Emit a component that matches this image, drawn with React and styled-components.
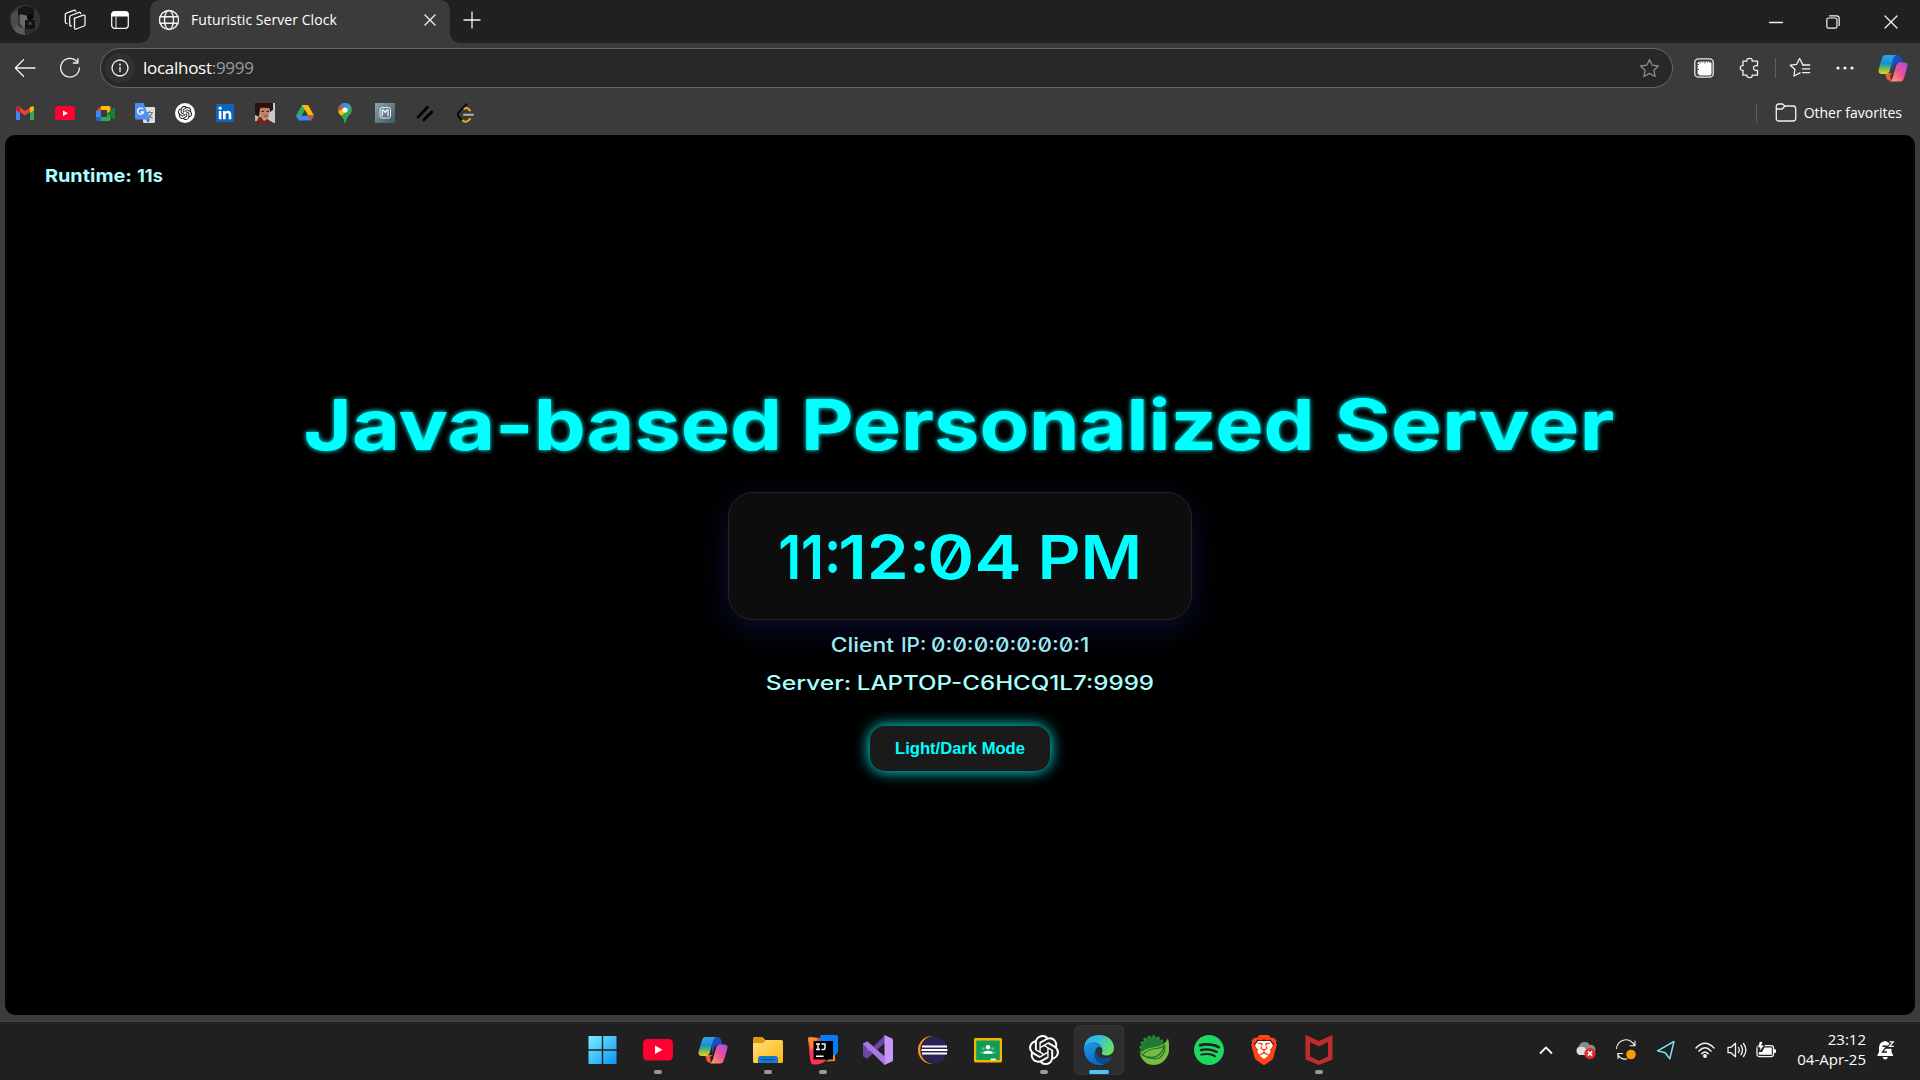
import React from "react";
import styled, { createGlobalStyle, css } from "styled-components";
import { SiOpenai, SiSpotify, SiBrave } from "react-icons/si";

const ui = '"Open Sans", "Noto Sans", sans-serif';
const wide = 'Inter, "DejaVu Sans", sans-serif';

const Global = createGlobalStyle`
  * { box-sizing: border-box; }
  body { margin: 0; background: #3b3b3b; overflow: hidden; }
  svg { display: block; flex: none; }
`;

const Screen = styled.div`
  width: 1920px;
  height: 1080px;
  display: flex;
  flex-direction: column;
  background: #3b3b3b;
  color: #fff;
  font-family: ${ui};
`;

/* title bar */
const TitleBar = styled.header`
  height: 43px;
  display: flex;
  flex: none;
`;
const TabTools = styled.div`
  width: 150px;
  background: #202020;
  border-bottom-right-radius: 10px;
  display: flex;
  align-items: center;
  gap: 24px;
  padding: 0 0 3px 10px;
`;
const TabSlot = styled.div`
  width: 300px;
  background: linear-gradient(#202020 50%, #3b3b3b 50%);
`;
const Tab = styled.div`
  height: 43px;
  background: #3b3b3b;
  border-radius: 10px 10px 0 0;
  display: flex;
  align-items: center;
  padding: 0 14px 3px 8px;
`;
const TabTitle = styled.span`
  flex: 1;
  margin-left: 11px;
  font-size: 14px;
  line-height: 20px;
  letter-spacing: 0.06px;
  white-space: nowrap;
`;
const Strip = styled.div`
  flex: 1;
  background: #202020;
  border-bottom-left-radius: 10px;
  display: flex;
  justify-content: space-between;
  padding-left: 12px;
`;
const WindowButtons = styled.div`
  display: flex;
`;
const Cell = styled.div`
  width: ${(p) => p.$w}px;
  height: ${(p) => p.$h || 43}px;
  flex: none;
  display: flex;
  align-items: center;
  justify-content: center;
`;

/* address row */
const Toolbar = styled.div`
  height: 50px;
  flex: none;
  display: flex;
  align-items: center;
  padding: 0 0 0 2px;
`;
const Address = styled.div`
  width: 1573px;
  height: 40px;
  margin: 0 8px 0 9px;
  border: 1px solid #686868;
  border-radius: 20px;
  background: #282828;
  display: flex;
  align-items: center;
  padding: 0 12px 0 4px;
`;
const InfoBadge = styled.span`
  width: 30px;
  height: 30px;
  border-radius: 50%;
  background: #313131;
  display: grid;
  place-items: center;
`;
const Url = styled.span`
  flex: 1;
  margin-left: 8px;
  font-size: 17px;
  line-height: 24px;
  letter-spacing: -0.28px;
  span { color: #9a9a9a; }
`;
const Divider = styled.i`
  width: 1px;
  height: 20px;
  flex: none;
  background: #5e5e5e;
`;

const Bookmarks = styled.nav`
  height: 42px;
  flex: none;
  display: flex;
  align-items: center;
  padding: 0 18px 2px 5px;
`;
const OtherFavorites = styled.div`
  margin-left: auto;
  display: flex;
  align-items: center;
  font-size: 14px;
  line-height: 20px;
  svg { margin: 0 7px 0 18px; }
`;

/* web page */
const Page = styled.main`
  height: 880px;
  margin: 0 5px;
  flex: none;
  border-radius: 10px;
  background: #000;
  overflow: hidden;
  display: flex;
  flex-direction: column;
  align-items: center;
  font-family: ${wide};
  font-feature-settings: "zero" 1;
`;
/* The display face is widened horizontally; $x takes back the first glyph's side bearing. */
const WordBox = styled.span`
  display: block;
  width: ${(p) => p.$w}px;
  margin-left: ${(p) => p.$gap || 0}px;
  white-space: nowrap;
`;
const Widened = styled.span`
  display: inline-block;
  transform-origin: 0 50%;
  transform: translateX(${(p) => p.$x}px) scaleX(${(p) => p.$k});
`;
const Word = ({ w, gap, k, x = 0, children }) => (
  <WordBox $w={w} $gap={gap}><Widened $k={k} $x={x}>{children}</Widened></WordBox>
);
const Line = styled.div`
  display: flex;
`;
const Runtime = styled(Line)`
  align-self: flex-start;
  height: 24px;
  margin: 29px 0 0 41px;
  color: #aff;
  font-size: 17.6px;
  line-height: 24px;
  font-weight: 700;
`;
const Heading = styled.h1`
  display: flex;
  height: 90px;
  margin: 192px 0 22px;
  color: #0ff;
  font-size: 70px;
  line-height: 90px;
  font-weight: 700;
  text-shadow: 0 0 5px #0ff;
`;
const ClockCard = styled.section`
  width: 464px;
  height: 128px;
  border: 1px solid #252525;
  border-radius: 25px;
  background: #0d0d0d;
  box-shadow: 0 8px 32px rgba(31, 38, 135, 0.37);
  display: flex;
  justify-content: center;
  color: #0ff;
  font-size: 60.5px;
  line-height: 128px;
  font-weight: 600;
`;
const Info = styled(Line)`
  height: 38px;
  margin-top: ${(p) => p.$top || 0}px;
  font-size: 19.6px;
  line-height: 38px;
  font-weight: 500;
  color: ${(p) => p.$c};
`;
const ModeButton = styled.button`
  width: 180px;
  height: 45px;
  margin-top: 24px;
  padding: 0;
  border: 0;
  border-radius: 15px;
  background: #1a1a1a;
  color: #0ff;
  box-shadow: 0 0 15px #0ff;
  font: 700 16.6px/45px "Liberation Sans", Arial, sans-serif;
`;

/* taskbar */
const Taskbar = styled.footer`
  height: 59px;
  margin-top: 6px;
  flex: none;
  border-top: 1px solid #444;
  background: #202020;
  display: grid;
  grid-template-columns: 575px 772px 1fr;
`;
const Apps = styled.div`
  grid-column: 2;
  display: flex;
  justify-content: space-between;
`;
const AppButton = styled.div`
  width: 50px;
  height: 50px;
  margin: 3px 2.5px;
  border-radius: 6px;
  display: flex;
  flex-direction: column;
  align-items: center;
  padding-top: 10px;
  ${(p) => p.$active && css`background: #2d2d2d; box-shadow: inset 0 0 0 1px #353535;`}
`;
const Pill = styled.i`
  width: ${(p) => (p.$active ? 20 : 8)}px;
  height: 4px;
  margin-top: 5px;
  border-radius: 2px;
  background: ${(p) => (p.$active ? "#4cc2ff" : "#9a9a9a")};
`;
const Tray = styled.div`
  grid-column: 3;
  display: flex;
  align-items: center;
  justify-content: flex-end;
  padding: 0 19px 2px 0;
`;
const Clock = styled.div`
  width: 85px;
  margin-right: 5px;
  padding-bottom: 2px;
  text-align: right;
  font-size: 15px;
  line-height: 20px;
`;

/* drawings */
const S = ({ w = 20, h, vb, children, ...r }) => (
  <svg width={w} height={h || w} viewBox={vb || `0 0 ${w} ${h || w}`} fill="none" stroke="none" {...r}>{children}</svg>
);
const line = { stroke: "#f2f2f2", strokeWidth: 1.3, strokeLinecap: "round", strokeLinejoin: "round" };

const Avatar = () => (
  <S w={30}>
    <defs><clipPath id="av"><circle cx="15" cy="15" r="15" /></clipPath></defs>
    <g clipPath="url(#av)">
      <rect width="30" height="30" fill="#3a3a3a" />
      <path d="M0 10L8 5 8 30H4Z" fill="#4c4c4c" />
      <path d="M8 4Q17-3 25 5L24 13 8 10Z" fill="#161616" />
      <path d="M10 9L18 11 17 21 14 24 10 18Z" fill="#6a6a6a" />
      <path d="M15 15h10v9h-10z" fill="#141414" />
      <circle cx="20" cy="12" r="3" fill="#080808" />
      <circle cx="20" cy="18.5" r="1.6" fill="#4a4a4a" />
      <path d="M24 6l6 4v14l-5-2z" fill="#333" />
      <path d="M6 20l8 4 1 6H4z" fill="#5c5c5c" />
      <path d="M15 25l10-2 2 8H15z" fill="#2c2c2c" />
    </g>
  </S>
);
const Workspaces = () => (
  <S w={22} {...line}>
    <path d="M10 9.3L19.5 6.1Q21 5.8 21 7.3V15.5Q21 16.7 20 17L12.2 20Q10.6 20.4 10.5 19V10.5Q10.5 9.5 11.5 9Z" />
    <path d="M7.5 16.8L6.7 17Q5.7 17 5.7 15.8V8Q5.7 7 6.8 6.5L15 3.3Q16.4 3 16.6 4.5" />
    <path d="M3 14.6Q1.3 14.5 1.3 13V5.8Q1.3 4.5 2.4 4.1L9.8 1.3Q11.3 1 11.7 2.2" />
  </S>
);
const TabActions = () => (
  <S w={20}><rect x="1.7" y="1.7" width="16.6" height="16.6" rx="3" {...line} /><path d="M1.5 6.5V4Q1.5 1.5 4 1.5H16Q18.5 1.5 18.5 4V6.5Z" fill="#fff" /><path d="M6 7V18" {...line} strokeWidth="1" /></S>
);
const Globe = () => (
  <S w={22} {...line} strokeWidth="1.4"><circle cx="11" cy="11" r="9.5" /><ellipse cx="11" cy="11" rx="4.5" ry="9.5" /><path d="M2 7.7H20M2 14.3H20" /></S>
);
const Cross = ({ s = 12 }) => <S w={s} {...line}><path d={`M1 1L${s - 1} ${s - 1}M${s - 1} 1L1 ${s - 1}`} /></S>;
const Plus = () => <S w={20} {...line} strokeLinecap="butt"><path d="M10 1.5V18.5M1.5 10H18.5" /></S>;
const Minimize = () => <S w={14} {...line}><path d="M.5 7.5H13.5" /></S>;
const Restore = () => <S w={14} {...line} strokeWidth="1.2"><rect x=".8" y="3" width="10.2" height="10.2" rx="1.8" /><path d="M3.5 .8H10.5Q13.2 .8 13.2 3.5V10.5" /></S>;
const Back = () => <S w={22} {...line}><path d="M21 11H1.5M9.5 2.8L1.3 11 9.5 19.2" /></S>;
const Reload = () => <S w={22} {...line}><path d="M17.8 4.2A9.4 9.4 0 1 0 20.4 11M18.9 1.6V6H14.4" /></S>;
const InfoIcon = () => <S w={18} {...line}><circle cx="9" cy="9" r="8" /><path d="M9 8.3V12.6" /><circle cx="9" cy="5.6" r=".4" /></S>;
const starPath = "M10.5 1.5L13.2 7.2 19.5 8 14.9 12.3 16.1 18.5 10.5 15.4 4.9 18.5 6.1 12.3 1.5 8 7.8 7.2Z";
const Star = () => <S w={21} {...line} stroke="#8b8b8b"><path d={starPath} /></S>;
const Ruler = () => (
  <S w={20}><rect x=".8" y=".8" width="18.4" height="18.4" rx="3.6" stroke="#e8e8e8" strokeWidth="1.3" /><rect x="3.5" y="3.5" width="14" height="14" rx="2" fill="#fff" />
    <path d="M6 2.5V5.5M8.5 2.5V4.5M11 2.5V5.5M13.5 2.5V4.5M16 2.5V5M2.5 6.5H5M2.5 9H4M2.5 11.5H5M2.5 14H4M2.5 16.5H5" stroke="#555" /></S>
);
const Puzzle = () => (
  <S w={22} {...line}><path d="M4 4.2H7.8Q7.4 1.3 10.5 1.3T13.2 4.2H18.5V8.8Q14.5 8.1 14.5 11T18.5 13.4V18.2H13.2Q13.5 20.7 10.6 20.7T7.8 18.2H4V13.3Q1.3 13.6 1.3 11T4 8.7Z" /></S>
);
const FavList = () => (
  <S w={22} {...line}><path d="M14.5 7.6H13.8L10.6 1.5 7.7 7.3 1.3 8.2 5.9 12.5 4.9 19 11 15.8M13.5 8H20.7M13.5 11.8H20.7M13.5 15.6H20.7" /></S>
);
const Dots = () => <S w={18} h={4} fill="#f2f2f2"><circle cx="2" cy="2" r="1.6" /><circle cx="9" cy="2" r="1.6" /><circle cx="16" cy="2" r="1.6" /></S>;
const Folder = () => <S w={22} {...line}><path d="M1.3 4.5Q1.3 2 3.8 2H7.5L9.8 4H18Q20.7 4 20.7 6.7V16.5Q20.7 19 18 19H4Q1.3 19 1.3 16.5ZM1.3 7H7.2L9.8 4" /></S>;

const Copilot = ({ id }) => (
  <S w={30} h={28} vb="0 0 30 28">
    <defs>
      <linearGradient id={id + "a"} x1="0" y1="0" x2="0" y2="1"><stop stopColor="#25a5ea" /><stop offset=".45" stopColor="#1d8fd0" /><stop offset=".7" stopColor="#62bf58" /><stop offset="1" stopColor="#f4ce1d" /></linearGradient>
      <linearGradient id={id + "b"} x1="1" y1="0" x2="0" y2="1"><stop stopColor="#a44fe8" /><stop offset=".5" stopColor="#ec5296" /><stop offset="1" stopColor="#ffae55" /></linearGradient>
    </defs>
    <path d="M14 1H19Q22 1 23 4L24.5 9H20Q17 9 16 12L14 18Z" fill="#174fc5" />
    <path d="M7 19H15L12 21 13 26Q10 28 8.5 24Z" fill="#ef5b37" />
    <path d="M7.5 1H18Q16 2 15 5L12 16Q11 20 7 20H4Q-.5 20 .8 15L4 4Q5 1 7.5 1Z" fill={`url(#${id}a)`} />
    <path d="M22 8.5H26Q30.5 8.5 29.2 13L26 24Q25 27.5 22 27.5H12Q14 26 15 23L18 12Q19 8.5 22 8.5Z" fill={`url(#${id}b)`} />
  </S>
);
const Gmail = () => (
  <S w={18} h={14}><path d="M0 2V13Q0 14 1 14H4V6Z" fill="#4285f4" /><path d="M18 2V13Q18 14 17 14H14V6Z" fill="#34a853" /><path d="M0 2Q1-1 3.5 1L9 5 14.5 1Q17-1 18 2L14 6 9 9.5 4 6Z" fill="#ea4335" /><path d="M14 1.4L14.5 1Q18-1 18 2V4L14 7Z" fill="#fbbc04" /><path d="M0 2V4L4 7V2Q1-1 0 2Z" fill="#c5221f" /></S>
);
const YouTube = ({ w = 20 }) => (
  <S w={w} h={w * 0.72} vb="0 0 20 14.4"><rect width="20" height="14.4" rx="3" fill="#ff0033" /><path d="M8 4.4V10L13 7.2Z" fill="#fff" /></S>
);
const Meet = () => (
  <S w={19} h={15}><path d="M0 5L5 0V5Z" fill="#ea4335" /><path d="M5 0H13Q14.5 0 14.5 1.5V6L11 8V4H5Z" fill="#fbbc04" /><path d="M0 5H5V11H0Z" fill="#4285f4" /><path d="M0 11H5V15H1.5Q0 15 0 13.5Z" fill="#1967d2" /><path d="M5 11H11V7L14.5 6V13.5Q14.5 15 13 15H5Z" fill="#34a853" /><path d="M11 7.5L17.5 2Q19 1.3 19 3V12Q19 13.7 17.5 13L11 7.5Z" fill="#188038" /></S>
);
const Translate = () => (
  <S w={20}><rect x="8" y="4" width="12" height="16" rx="1" fill="#dcdcdc" /><path d="M11 9.5H18M14.5 8V9.5M17 9.5Q15.5 14 12 15.5M12.5 10Q14 14 17.5 15.5" stroke="#6b8088" strokeWidth="1.1" /><path d="M11 16H15L13 20Z" fill="#3a5fb0" /><path d="M1 0H8.5L14.5 16.5H1Q0 16.5 0 15.5V1Q0 0 1 0Z" fill="#4f8ef5" /><path d="M8 6.3A3 3 0 1 0 8.5 9H5.8" stroke="#fff" strokeWidth="1.4" /></S>
);
const GptMark = () => (
  <S w={20}><circle cx="10" cy="10" r="10" fill="#fff" /><svg x="3" y="3" width="14" height="14"><SiOpenai size={14} color="#111" /></svg></S>
);
const LinkedIn = () => (
  <S w={18}><rect width="18" height="18" rx="1.2" fill="#0a66c2" /><path d="M2.8 7H5.4V15.2H2.8ZM7 7H9.5V8.2Q10.2 6.8 12 6.8 15.3 6.8 15.3 10.6V15.2H12.7V11Q12.7 9 11.2 9 9.6 9 9.6 11V15.2H7Z" fill="#fff" /><circle cx="4.1" cy="4.2" r="1.6" fill="#fff" /></S>
);
const Portrait = () => (
  <S w={20}><rect width="20" height="20" fill="#b8aba0" /><rect x="14" width="6" height="20" fill="#c9c7d2" /><path d="M0 0H18V7L15 9 14 5 5 6 4 14 0 12Z" fill="#2a130d" /><path d="M5 5Q10 4 14.5 6L14 13 11 16.5 6 14Z" fill="#b98463" /><path d="M6.5 8.5H9M11.5 8.5H14" stroke="#3a1a10" /><path d="M9 13Q11 13.6 12.5 12.8" stroke="#8e3a2c" /><path d="M0 14L6 14 9 18 12 16 19 20H0Z" fill="#7c2018" /><path d="M0 12L4 14 2 18 0 18Z" fill="#b9b3aa" /></S>
);
const Drive = () => (
  <S w={18} h={16}><path d="M6 0H12L9 5.2 3 15.6 0 10.4Z" fill="#34a853" /><path d="M6 0H12L18 10.4H12Z" fill="#fbbc04" /><path d="M0 10.4L3 15.6H15L18 10.4Z" fill="#4285f4" /><path d="M12 10.4H18L15 15.6Z" fill="#ea4335" /><path d="M9 5.2L12 10.4H6Z" fill="#3b3b3b" /></S>
);
const Maps = () => (
  <S w={14} h={20}><path d="M7 0A7 7 0 0 1 14 7Q14 10 10.5 13 8 16 7.6 19.3 7 20.5 6.4 19.3 6 16 3.5 13 0 10 0 7A7 7 0 0 1 7 0Z" fill="#34a853" /><path d="M1.7 2.4A7 7 0 0 1 9 .3L4.6 5.4Z" fill="#4285f4" transform="translate(.2 0)" /><path d="M1.7 2.4A7 7 0 0 0 0 7L4.2 7.5 5 5Z" fill="#ea4335" /><path d="M9 .3A7 7 0 0 1 13 3.4L9.5 8Z" fill="#4b90ff" /><path d="M.2 8.5Q1 11 3.2 12.8L9 8 5 5.5Z" fill="#fbbc04" /><circle cx="7" cy="7" r="2.6" fill="#fff" /></S>
);
const MonkeyTile = () => (
  <S w={20}><defs><linearGradient id="mt" x1="0" y1="0" x2="1" y2="1"><stop stopColor="#8ba6b0" /><stop offset="1" stopColor="#3d5764" /></linearGradient></defs><rect width="20" height="20" fill="url(#mt)" /><rect x="5" y="4.5" width="10.5" height="10.5" rx="2" stroke="#e8eef0" /><path d="M7.3 13V7.2H8.6L10.2 9.5 11.8 7.2H13V13" stroke="#fff" strokeWidth="1.2" /></S>
);
const Slashes = () => <S w={18} h={17} stroke="#000" strokeWidth="2.6" strokeLinecap="round"><path d="M2 12.2L11.5 2.2M7.8 15L15.8 7" /></S>;
const Leet = () => (
  <S w={17} h={20} strokeLinecap="round" strokeWidth="2"><path d="M9.5 1.2L2 8.8Q-.2 11.5 2 14L4.5 16.8" stroke="#0b0b0b" /><path d="M7.5 5.8Q9.5 4.3 11 5.5L13 7.5M6 17.6Q9 19.8 11.5 17.5L13 16" stroke="#ffa116" /><path d="M7 11.7H16" stroke="#b3b3b3" /></S>
);
const Windows = () => (
  <S w={30}><defs><linearGradient id="wn" x1="0" y1="0" x2="29" y2="29" gradientUnits="userSpaceOnUse"><stop stopColor="#7ff0ff" /><stop offset="1" stopColor="#0a93f7" /></linearGradient></defs><path d="M.5 1H13.8V14.3H.5ZM15.2 1H28.5V14.3H15.2ZM.5 15.7H13.8V29H.5ZM15.2 15.7H28.5V29H15.2Z" fill="url(#wn)" /></S>
);
const Explorer = () => (
  <S w={30}><defs><linearGradient id="ex" x1="0" y1="0" x2="1" y2="1"><stop stopColor="#ffe07a" /><stop offset="1" stopColor="#fbb614" /></linearGradient></defs><path d="M0 3.5Q0 2 1.5 2H9.5L12.5 5H20V12H0Z" fill="#dc9c07" /><path d="M0 8H10L13 5H28.5Q30 5 30 6.5V26.5Q30 28 28.5 28H1.5Q0 28 0 26.5Z" fill="url(#ex)" /><path d="M5 28V23.5Q5 21 7.5 21H22.5Q25 21 25 23.5V28Z" fill="#1479cf" /><path d="M8.5 24.5H21.5" stroke="#0b4f8f" /></S>
);
const IntelliJ = () => (
  <S w={30}><path d="M0 4Q0 2 2 2L12 3V14L18 26 14 28Q10 30 5 29.5 3 29 2 24Z" fill="#ff315d" /><path d="M0 4L1 2 9 3V9L3 15Z" fill="#ff8a26" /><path d="M13 0H28Q30 0 30 2V17L24 24 10 8Z" fill="#087cfa" /><path d="M18 24H27V22L24 18Z" fill="#ff8a26" /><path d="M18 26.5L27 26V20Z" fill="#ff8a26" /><rect x="5.5" y="6" width="19.5" height="18.5" fill="#000" /><path d="M8 9H12M10 9V14.5M8 14.5H12M13.5 9H17V13Q17 14.5 15.5 14.5H13.5M8 21.3H15.5" stroke="#fff" strokeWidth="1.4" /></S>
);
const VisualStudio = () => (
  <S w={30}><path d="M0 9L4 6.5 8 10V20L4 23.5 0 21Z" fill="#8459c9" /><path d="M4 6.5L8.5 9.8 22 22V30L4 10.5Z" fill="#9a6ad8" /><path d="M0 9L4 6.5 22 22V30Z" fill="#a878e0" /><path d="M4 23.5L22 8V0L8 14 0 21Z" fill="#6b45a6" /><path d="M21.5 0L29 3.5Q30 4 30 5V25Q30 26 29 26.5L21.5 30Z" fill="#c896f8" /><path d="M0 9L4 12V18L0 21Z" fill="#6b45a6" /><path d="M0 9L4 6.5 22 22V30Z" fill="#a878e0" /></S>
);
const Eclipse = () => (
  <S w={30}><ellipse cx="14" cy="15" rx="14" ry="14" fill="#f7941e" /><circle cx="16.3" cy="15" r="14" fill="#202020" /><circle cx="16.3" cy="15" r="13.2" fill="#2c2255" /><path d="M4 11.6H29M3.5 15H29.5M4 18.4H29" stroke="#fff" strokeWidth="2" /></S>
);
const Classroom = () => (
  <S w={28} h={30}><rect x="1" y="4.2" width="26" height="22" rx=".8" fill="#109d58" stroke="#f4b400" strokeWidth="2.4" /><circle cx="14" cy="12.3" r="2.2" fill="#fff" /><circle cx="9.3" cy="13.5" r="1.5" fill="#57bb8a" /><circle cx="18.7" cy="13.5" r="1.5" fill="#57bb8a" /><path d="M6 18.8Q6 16 10 16H18Q22 16 22 18.8Z" fill="#57bb8a" /><path d="M9.3 18.8Q9.5 15.8 14 15.8T18.7 18.8Z" fill="#fff" /><path d="M16.5 23.6H22V25.2H16.5Z" fill="#fff" /></S>
);
const Edge = () => (
  <S w={30}><defs><linearGradient id="e1" x1="0" y1="0" x2="1" y2=".5"><stop stopColor="#28a8ea" /><stop offset=".5" stopColor="#35c1d8" /><stop offset="1" stopColor="#67e06a" /></linearGradient><linearGradient id="e2" x1="0" y1="0" x2=".6" y2="1"><stop stopColor="#1b9de2" /><stop offset="1" stopColor="#0a65c8" /></linearGradient></defs>
    <path d="M0 15Q0 0 15.5 0 28 .5 30 12 30 20 23 20.5 17 20.5 18 17.5 19.5 14 16.5 11 10 5 0 15Z" fill="url(#e1)" />
    <path d="M0 14Q2 7 9.5 7 17 7.5 17.5 13 13 10.5 11.5 15 10.5 22 17 25.5 22 28 19.5 29.4 11 31.5 4.5 25.5 0 21 0 14Z" fill="url(#e2)" />
    <path d="M11.5 15Q8.5 21 13 26 17 30 20 29 25 27.5 28 22.5 27.5 21.8 24 22.8 16 24.5 13 19 11.5 17 11.5 15Z" fill="#114a8b" /></S>
);
const Spring = () => (
  <S w={30}><circle cx="13.5" cy="13.5" r="11.8" fill="#1f7a33" stroke="#2b8a3a" strokeWidth="3" strokeDasharray="2.6 2" /><path d="M29 3.5Q32 15 28 22 23 30 15 30 5 30 1 20 4 13 16 12 25 11 29 3.5Z" fill="#77bc3f" /><path d="M3 20Q15 25 21 19 24 16 25 12M3 20Q9 14 17 13.5 23 13 25.5 10 27 18 21 22.5 15 26 3 20Z" fill="#77bc3f" stroke="#24702f" strokeWidth="1.2" /></S>
);
const Brave = () => (
  <S w={30}><path d="M9 6H21L24 10 21 20 15 25 9 20 6 10Z" fill="#fff" /><svg width="30" height="30"><SiBrave size={30} color="#ff4314" /></svg></S>
);
const McAfee = () => <S w={30}><path fillRule="evenodd" d="M1.5 0L15 6 28.5 0V24.5L15 30 1.5 24.5ZM6 7V21.5L15 25.7 24 21.5V7L15 11.5Z" fill="#c22b2e" /></S>;
const Chevron = () => <S w={14} {...line} strokeWidth="1.8"><path d="M1.5 10L7 4.5 12.5 10" /></S>;
const Cloud = () => <S w={22} h={20}><path d="M4.5 14A4 4 0 0 1 3.8 6.5 6 6 0 0 1 14.8 5 4.6 4.6 0 0 1 17 14Z" fill="#8b8b8b" /><path d="M4.5 15A4.2 4.2 0 0 1 4.5 7Q9 6 11 9L15 15Z" fill="#dedede" /><circle cx="15" cy="13.5" r="5.6" fill="#e02a2f" /><path d="M12.9 11.4L17.1 15.6M17.1 11.4L12.9 15.6" stroke="#fff" strokeWidth="1.5" /></S>;
const Sync = () => <S w={22} {...line} strokeWidth="1.1"><path d="M1.5 9.5A9.4 9.4 0 0 1 19.5 6.5M20 2V6.8H15M3 19.5V14.5H7.5M2.5 14.7A9 9 0 0 0 12 20" /><circle cx="16" cy="15.5" r="4.8" fill="#ff9a00" stroke="none" /></S>;
const Nav = () => <S w={20}><path d="M18 1.5L13.8 18.8 9.2 12.8 1.5 10.8Z" stroke="#7fdcf5" strokeWidth="1.5" strokeLinejoin="round" /></S>;
const Wifi = () => <S w={20} {...line} strokeWidth="1.5"><path d="M1 8Q10 -1.5 19 8M4 11Q10 4.5 16 11M6.8 13.8Q10 10.3 13.2 13.8" /><circle cx="10" cy="16" r="1.2" fill="#fff" /></S>;
const Speaker = () => <S w={20} {...line} strokeWidth="1.3"><path d="M1 7.3H4L8.5 3.2V16.8L4 12.7H1ZM11.5 7.5Q13 10 11.5 12.5M14 5.3Q17 10 14 14.7M16.5 3.5Q21.3 10 16.5 16.5" /></S>;
const Battery = () => <S w={20} h={18}><rect x="1" y="4.6" width="16.5" height="11" rx="2.4" {...line} /><path d="M8.5 6.5H15.8V13.8H2.8V11H6Z" fill="#fff" /><path d="M18 8.2H19Q20 8.2 20 9.2V11Q20 12 19 12H18Z" fill="#fff" /><path d="M3.5 .5H7L5.7 4.2H8.6L3.2 11 4 6.8H1.5Z" fill="#fff" stroke="#202020" strokeWidth=".8" /></S>;
const Bell = () => <S w={18} h={20}><path d="M8.5 1Q2 1.5 2 8V12L.3 15.2Q0 16 1 16H15.5Q16.5 16 16 15L14.5 12V8Q14 3 8.5 1ZM5.5 17H11Q10 19.6 8.2 19.6T5.5 17Z" fill="#fff" /><path d="M5.5 6.3H9.8L5.5 12H10" stroke="#202020" strokeWidth="1.4" /><path d="M12 1.5H16.5L12 7H16.8" stroke="#202020" strokeWidth="3.4" /><path d="M12.5 1.8H16.3L12.5 6.3H16.8" stroke="#fff" strokeWidth="1.2" /></S>;

const bookmarks = [Gmail, YouTube, Meet, Translate, GptMark, LinkedIn, Portrait, Drive, Maps, MonkeyTile, Slashes, Leet];
const apps = [
  [<Windows />], [<Cell $w={30} $h={30}><YouTube w={30} /></Cell>, 1], [<Cell $w={30} $h={30}><Copilot id="ct" /></Cell>], [<Explorer />, 1], [<IntelliJ />, 1],
  [<VisualStudio />], [<Eclipse />], [<Classroom />], [<SiOpenai size={30} color="#fff" />, 1], [<Edge />, 2],
  [<Spring />], [<SiSpotify size={30} color="#1ed760" />], [<Brave />], [<McAfee />, 1],
];

export default function App() {
  return (
    <Screen>
      <Global />
      <TitleBar>
        <TabTools><Avatar /><Workspaces /><TabActions /></TabTools>
        <TabSlot><Tab><Globe /><TabTitle>Futuristic Server Clock</TabTitle><Cross /></Tab></TabSlot>
        <Strip>
          <Cell $w={20} $h={39}><Plus /></Cell>
          <WindowButtons>
            <Cell $w={57}><Minimize /></Cell>
            <Cell $w={58}><Restore /></Cell>
            <Cell $w={58}><Cross s={14} /></Cell>
          </WindowButtons>
        </Strip>
      </TitleBar>
      <Toolbar>
        <Cell $w={46}><Back /></Cell>
        <Cell $w={43}><Reload /></Cell>
        <Address>
          <InfoBadge><InfoIcon /></InfoBadge>
          <Url>localhost<span>:9999</span></Url>
          <Star />
        </Address>
        <Cell $w={45}><Ruler /></Cell>
        <Cell $w={47}><Puzzle /></Cell>
        <Cell $w={4}><Divider /></Cell>
        <Cell $w={46}><FavList /></Cell>
        <Cell $w={44}><Dots /></Cell>
        <Cell $w={52}><Copilot id="cb" /></Cell>
      </Toolbar>
      <Bookmarks>
        {bookmarks.map((B, i) => <Cell key={i} $w={40} $h={40}><B /></Cell>)}
        <OtherFavorites><Divider /><Folder /><span>Other favorites</span></OtherFavorites>
      </Bookmarks>
      <Page>
        <Runtime>
          <Word w={85} k={1.13} x={-1.1}>Runtime:</Word>
          <Word w={26} gap={5.5} k={1.033}>11s</Word>
        </Runtime>
        <Heading>
          <Word w={472.5} k={1.18} x={-2.4}>Java-based</Word>
          <Word w={505} gap={27.5} k={1.157} x={-5}>Personalized</Word>
          <Word w={277} gap={27} k={1.228} x={-3.5}>Server</Word>
        </Heading>
        <ClockCard>
          <Word w={57.5} k={0.896} x={-1.8}>11:</Word>
          <Word w={85} gap={3} k={1.114} x={-2.7}>12:</Word>
          <Word w={90} gap={5} k={1.18} x={-3.8}>04</Word>
          <Word w={97.5} gap={22} k={1.105} x={-5.5}>PM</Word>
        </ClockCard>
        <Info $top={6} $c="#9fe8f5">
          <Word w={62.5} k={1.167} x={-1.2}>Client</Word>
          <Word w={24} gap={7.5} k={1.06} x={-1.1}>IP:</Word>
          <Word w={156.5} gap={6.5} k={1.145} x={-0.9}>0:0:0:0:0:0:0:1</Word>
        </Info>
        <Info $c="#aff">
          <Word w={84} k={1.26} x={-1.3}>Server:</Word>
          <Word w={295.5} gap={7.5} k={1.231} x={-1.2}>LAPTOP-C6HCQ1L7:9999</Word>
        </Info>
        <ModeButton>Light/Dark Mode</ModeButton>
      </Page>
      <Taskbar>
        <Apps>
          {apps.map(([icon, state], i) => (
            <AppButton key={i} $active={state === 2}>{icon}{state && <Pill $active={state === 2} />}</AppButton>
          ))}
        </Apps>
        <Tray>
          <Cell $w={40}><Chevron /></Cell>
          <Cell $w={40}><Cloud /></Cell>
          <Cell $w={40}><Sync /></Cell>
          <Cell $w={40}><Nav /></Cell>
          <Cell $w={38}><Wifi /></Cell>
          <Cell $w={26}><Speaker /></Cell>
          <Cell $w={31}><Battery /></Cell>
          <Clock>23:12<br />04-Apr-25</Clock>
          <Cell $w={30}><Bell /></Cell>
        </Tray>
      </Taskbar>
    </Screen>
  );
}
